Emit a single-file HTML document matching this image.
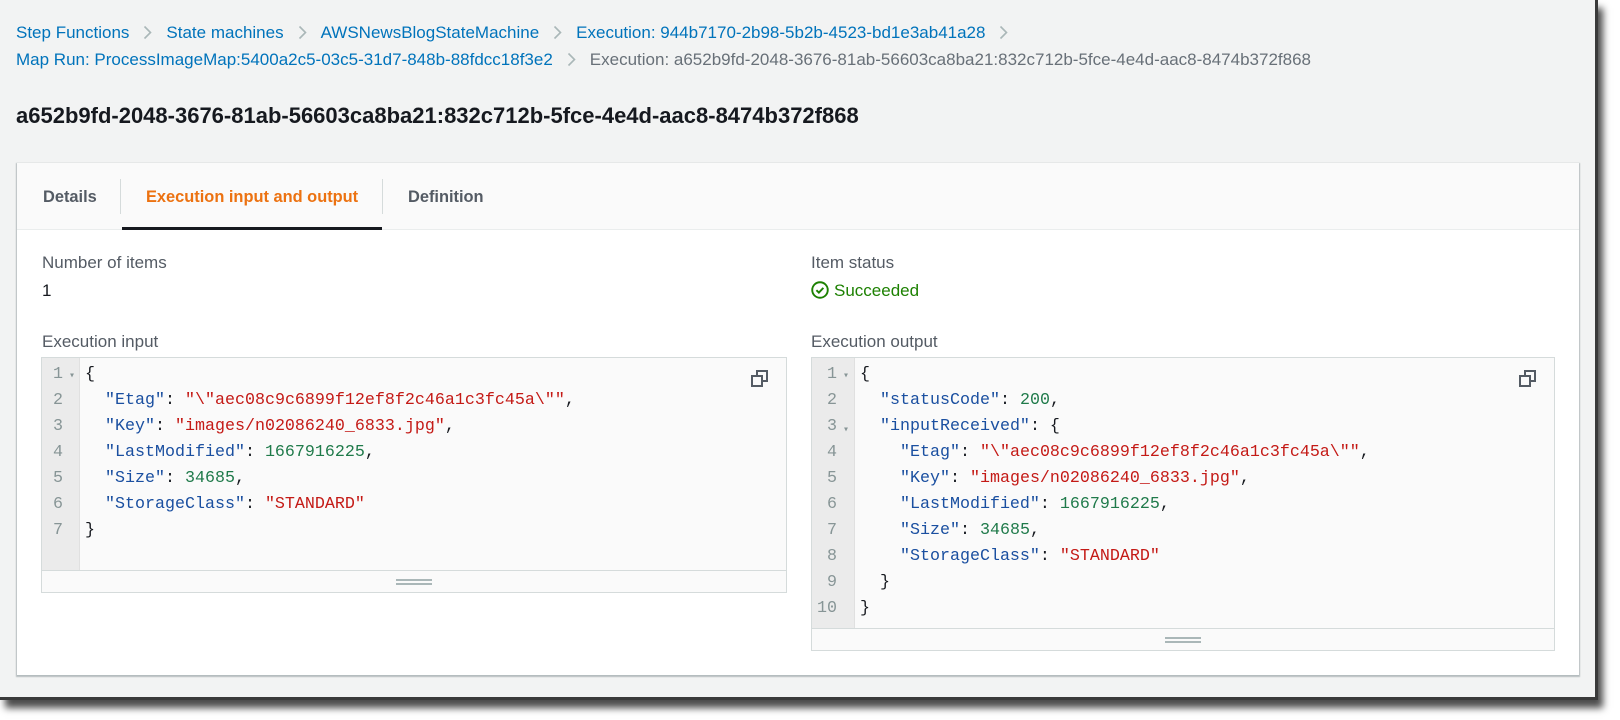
<!DOCTYPE html>
<html><head><meta charset="utf-8"><style>
*{box-sizing:border-box;margin:0;padding:0}
body{width:1620px;height:720px;background:#fff;position:relative;overflow:hidden;font-family:"Liberation Sans",sans-serif}
.page{position:absolute;left:0;top:0;width:1598px;height:700px;background:#f2f3f3;box-shadow:5px 8px 7px rgba(0,0,0,.7);border-right:3px solid #3a3a3a;border-bottom:3px solid #3a3a3a}
.bc{position:absolute;left:16px;font-size:17px;line-height:20px;color:#0073bb;white-space:nowrap}
.bc svg{margin:0 14px;vertical-align:-2px}
.bc .g{color:#687078}
h1{position:absolute;left:16px;top:103px;font-size:22px;line-height:26px;font-weight:bold;color:#16191f;white-space:nowrap}
.card{position:absolute;left:17px;top:163px;width:1562px;height:512px;background:#fff;box-shadow:0 1px 1px 1px rgba(0,28,36,.25)}
.tabs{height:67px;border-bottom:1px solid #eaeded;position:relative;background:#fafafa}
.tab{position:absolute;top:24px;font-size:16.4px;line-height:20px;font-weight:bold;color:#545b64;white-space:nowrap}
.sep{position:absolute;top:16px;width:1px;height:35px;background:#d5dbdb}
.ul{position:absolute;left:105px;top:64px;width:260px;height:3px;background:#16191f}
.lab{position:absolute;font-size:17px;line-height:20px;color:#545b64;white-space:nowrap}
.val{position:absolute;font-size:17px;line-height:20px;color:#16191f;white-space:nowrap}
.ed{position:absolute;background:#fafafa;border:1px solid #d5dbdb}
.gut{position:absolute;left:0;top:0;bottom:22px;background:#ebebeb;border-right:1px solid #e0e0e0}
.bar{position:absolute;left:0;right:0;bottom:0;height:22px;border-top:1px solid #d5dbdb;background:#fafafa}
.bar i{position:absolute;left:50%;top:8px;width:36px;height:6px;margin-left:-18px;border-top:2px solid #aab7b8;border-bottom:2px solid #aab7b8}
pre{position:absolute;top:4px;font-family:"Liberation Mono",monospace;font-size:16.67px;line-height:26px;color:#16191f}
.ln{color:#879596;text-align:right}
.k{color:#1a4fa0}.s2{color:#c41a16}.n{color:#1f7a4a}
.ar{color:#879596;font-size:10px}
.cp{position:absolute;top:12px;width:17px;height:17px}
</style></head><body>
<div class="page">
<div class="bc" style="top:23px">Step Functions<svg width="9" height="15" viewBox="0 0 9 15"><path d="M1.5 1.5l6 6-6 6" fill="none" stroke="#aab7b8" stroke-width="1.6"/></svg>State machines<svg width="9" height="15" viewBox="0 0 9 15"><path d="M1.5 1.5l6 6-6 6" fill="none" stroke="#aab7b8" stroke-width="1.6"/></svg>AWSNewsBlogStateMachine<svg width="9" height="15" viewBox="0 0 9 15"><path d="M1.5 1.5l6 6-6 6" fill="none" stroke="#aab7b8" stroke-width="1.6"/></svg>Execution: 944b7170-2b98-5b2b-4523-bd1e3ab41a28<svg width="9" height="15" viewBox="0 0 9 15"><path d="M1.5 1.5l6 6-6 6" fill="none" stroke="#aab7b8" stroke-width="1.6"/></svg></div>
<div class="bc" style="top:50px">Map Run: ProcessImageMap:5400a2c5-03c5-31d7-848b-88fdcc18f3e2<svg width="9" height="15" viewBox="0 0 9 15"><path d="M1.5 1.5l6 6-6 6" fill="none" stroke="#aab7b8" stroke-width="1.6"/></svg><span class="g">Execution: a652b9fd-2048-3676-81ab-56603ca8ba21:832c712b-5fce-4e4d-aac8-8474b372f868</span></div>
<h1>a652b9fd-2048-3676-81ab-56603ca8ba21:832c712b-5fce-4e4d-aac8-8474b372f868</h1>
<div class="card">
<div class="tabs">
<div class="tab" style="left:26px">Details</div>
<div class="sep" style="left:103px"></div>
<div class="tab" style="left:129px;color:#ec7211">Execution input and output</div>
<div class="sep" style="left:365px"></div>
<div class="tab" style="left:391px">Definition</div>
<div class="ul"></div>
</div>
</div>
<div class="lab" style="left:42px;top:253px">Number of items</div>
<div class="val" style="left:42px;top:281px">1</div>
<div class="lab" style="left:811px;top:253px">Item status</div>
<div class="val" style="left:811px;top:281px;color:#1d8102"><svg width="18" height="18" viewBox="0 0 16 16" style="vertical-align:-3px;margin-right:5px"><circle cx="8" cy="8" r="6.9" fill="none" stroke="#1d8102" stroke-width="1.7"/><path d="M4.8 8.2l2.2 2.1 4-4.2" fill="none" stroke="#1d8102" stroke-width="1.7"/></svg>Succeeded</div>
<div class="lab" style="left:42px;top:332px">Execution input</div>
<div class="lab" style="left:811px;top:332px">Execution output</div>
<div class="ed" style="left:41px;top:357px;width:746px;height:236px">
<div class="gut" style="width:38px"></div>
<pre class="ln" style="left:11px">1
2
3
4
5
6
7</pre>
<pre style="left:27px"><span class="ar">▾</span></pre>
<pre style="left:43px">{
  <span class="k">"Etag"</span>: <span class="s2">"\"aec08c9c6899f12ef8f2c46a1c3fc45a\""</span>,
  <span class="k">"Key"</span>: <span class="s2">"images/n02086240_6833.jpg"</span>,
  <span class="k">"LastModified"</span>: <span class="n">1667916225</span>,
  <span class="k">"Size"</span>: <span class="n">34685</span>,
  <span class="k">"StorageClass"</span>: <span class="s2">"STANDARD"</span>
}</pre>
<svg class="cp" style="left:709px" viewBox="0 0 17 17"><rect x="1" y="6" width="10" height="10" fill="none" stroke="#545b64" stroke-width="2"/><path d="M6 6V1h10v10h-5" fill="none" stroke="#545b64" stroke-width="2"/></svg>
<div class="bar"><i></i></div>
</div>
<div class="ed" style="left:811px;top:357px;width:744px;height:294px">
<div class="gut" style="width:43px"></div>
<pre class="ln" style="left:5px">1
2
3
4
5
6
7
8
9
10</pre>
<pre style="left:31px"><span class="ar">▾</span>

<span class="ar">▾</span></pre>
<pre style="left:48px">{
  <span class="k">"statusCode"</span>: <span class="n">200</span>,
  <span class="k">"inputReceived"</span>: {
    <span class="k">"Etag"</span>: <span class="s2">"\"aec08c9c6899f12ef8f2c46a1c3fc45a\""</span>,
    <span class="k">"Key"</span>: <span class="s2">"images/n02086240_6833.jpg"</span>,
    <span class="k">"LastModified"</span>: <span class="n">1667916225</span>,
    <span class="k">"Size"</span>: <span class="n">34685</span>,
    <span class="k">"StorageClass"</span>: <span class="s2">"STANDARD"</span>
  }
}</pre>
<svg class="cp" style="left:707px" viewBox="0 0 17 17"><rect x="1" y="6" width="10" height="10" fill="none" stroke="#545b64" stroke-width="2"/><path d="M6 6V1h10v10h-5" fill="none" stroke="#545b64" stroke-width="2"/></svg>
<div class="bar"><i></i></div>
</div>
</div>
</body></html>
